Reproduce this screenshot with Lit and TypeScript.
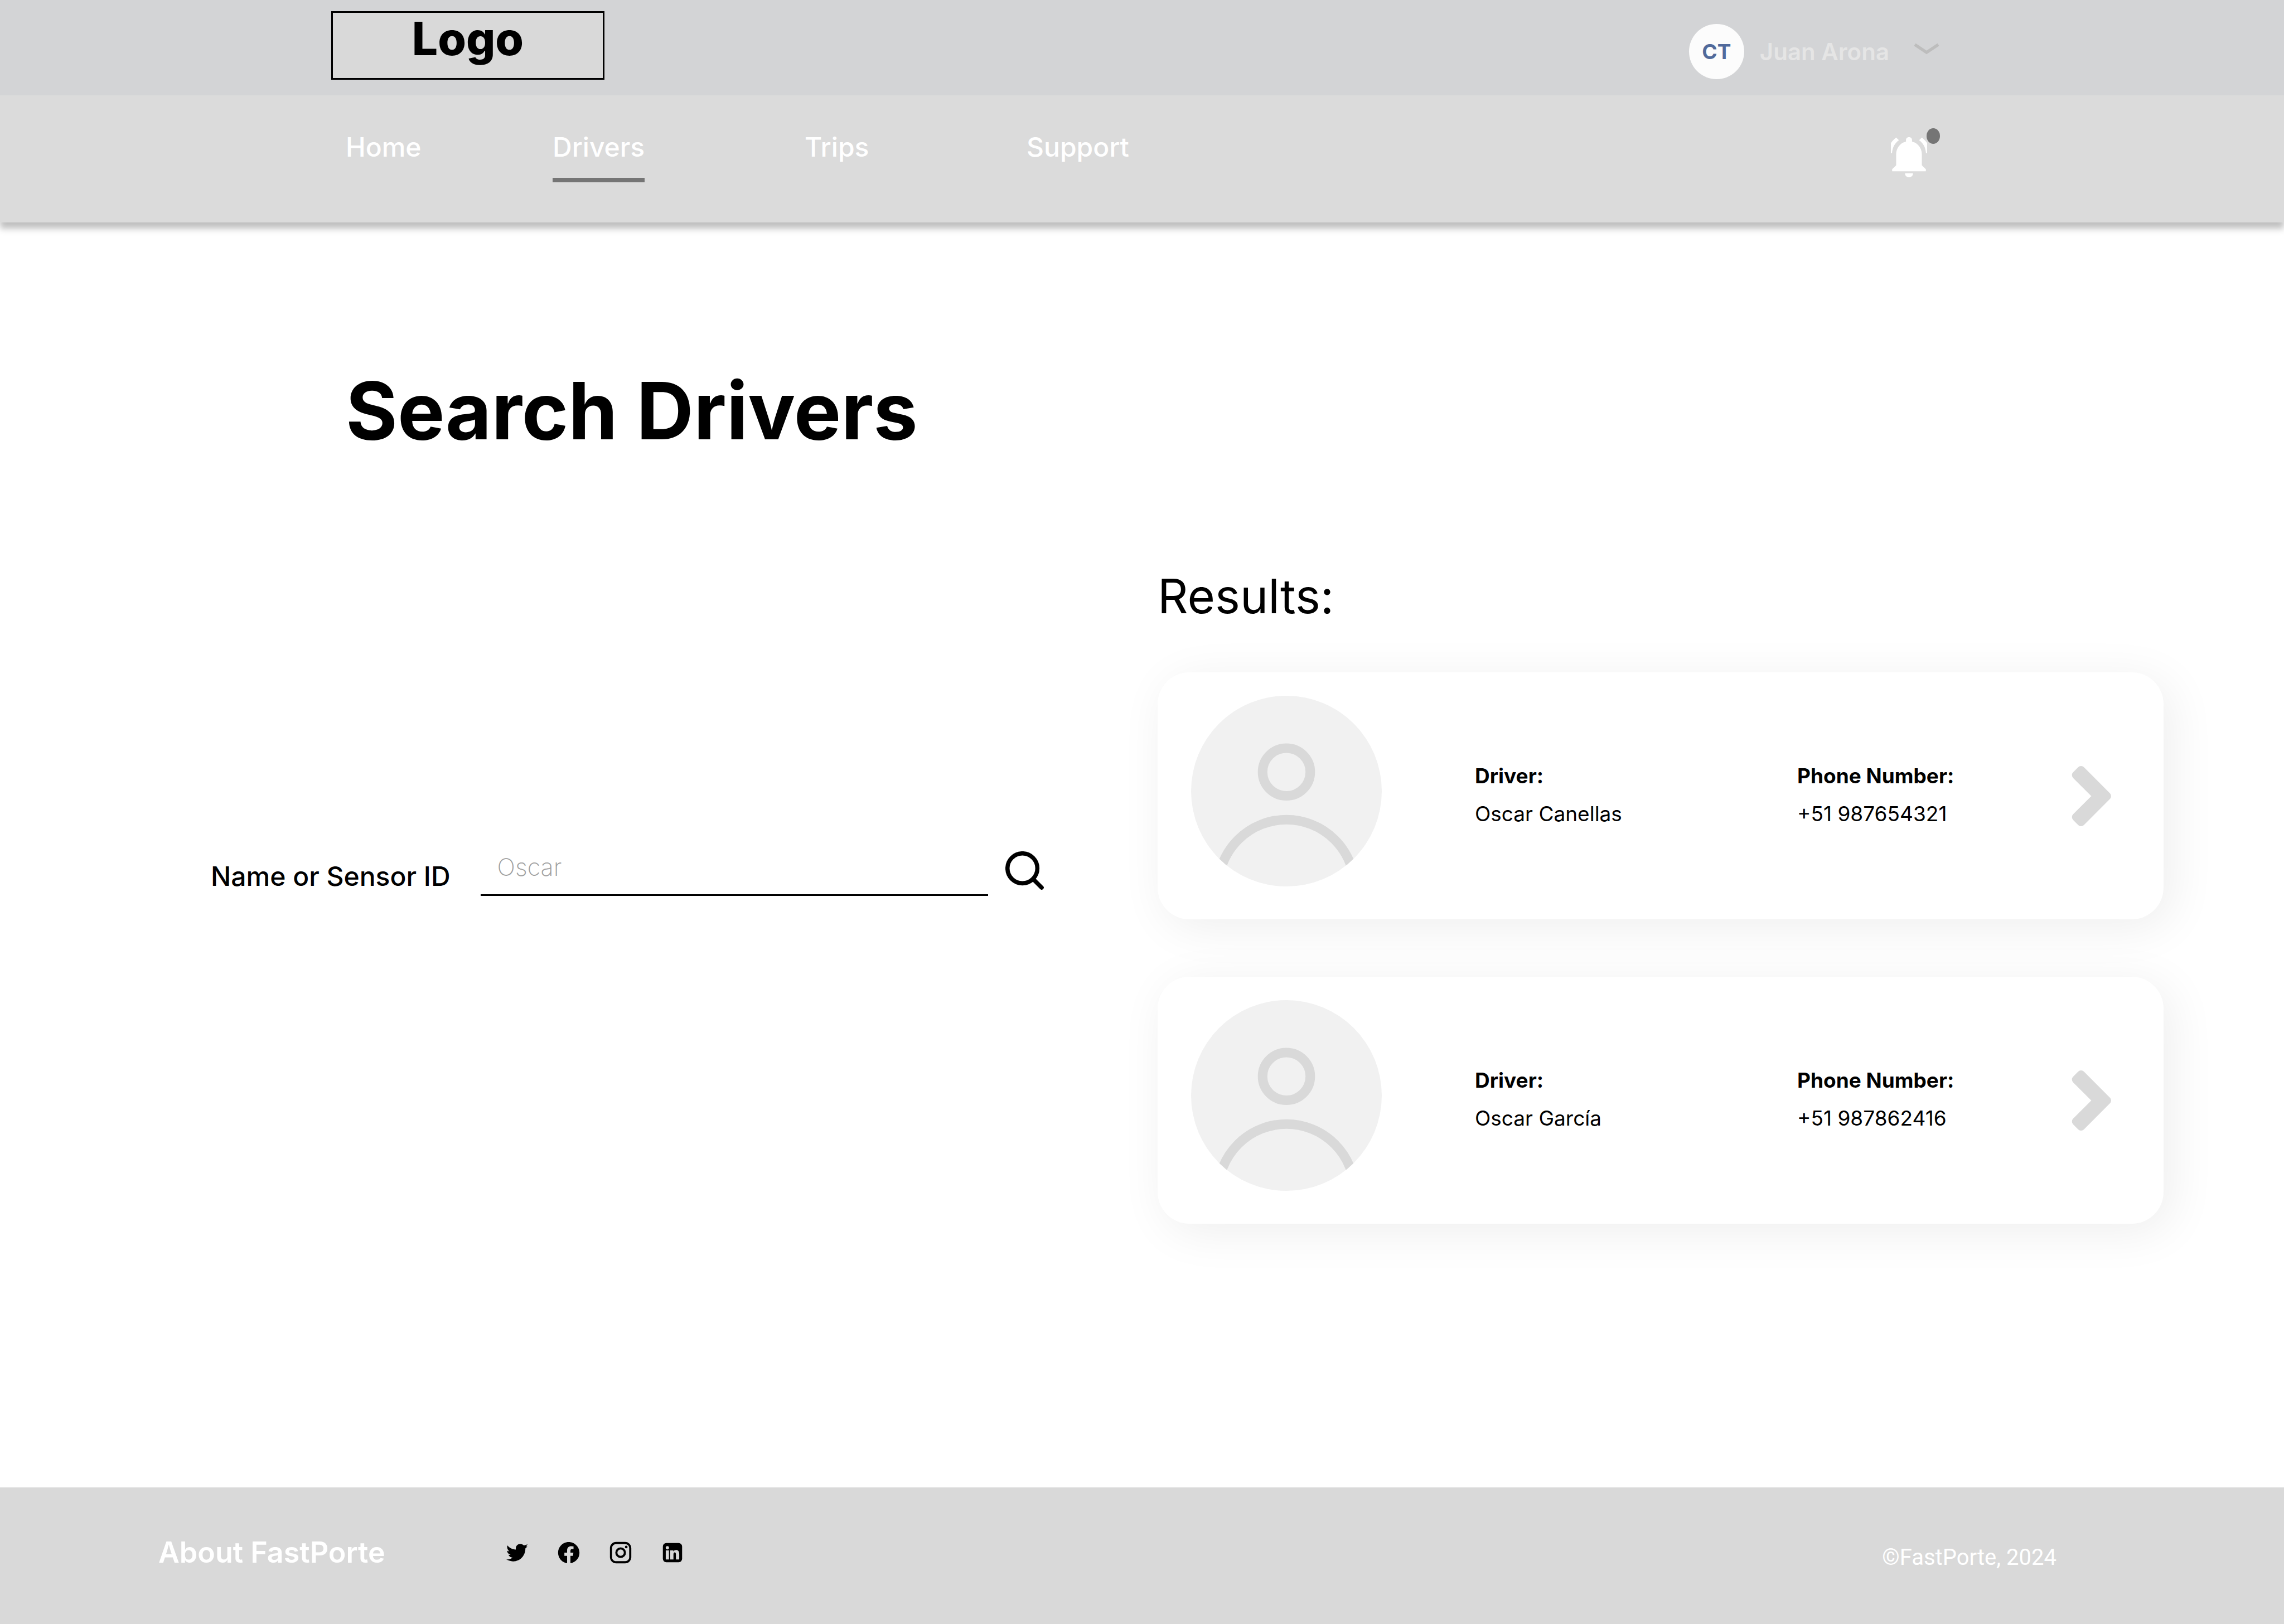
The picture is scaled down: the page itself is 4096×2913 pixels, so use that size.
import { LitElement, html, css, svg } from "lit";
import { customElement, property } from "lit/decorators.js";

interface Driver {
  name: string;
  phone: string;
}

const DRIVERS: Driver[] = [
  { name: "Oscar Canellas", phone: "+51 987654321" },
  { name: "Oscar García", phone: "+51 987862416" },
];

const NAV_ITEMS = ["Home", "Drivers", "Trips", "Support"];

const SOCIAL_ICONS = [
  {
    label: "Twitter",
    box: "36 40 194 194",
    path: "M61 82C76 101 98 112 125 114C121 90 136 72 159 72C170 72 179 76 186 83C196 81 204 78 213 74C211 80 207 85 201 89C205 90 208 90 212 89C208 96 203 101 197 105C199 155 160 203 104 203C86 203 68 197 53 188C71 190 88 185 101 175C86 174 74 166 69 153C75 154 80 154 86 152C70 148 59 137 59 122C64 125 70 127 76 127C61 116 56 98 61 82Z",
  },
  {
    label: "Facebook",
    box: "0 0 24 24",
    path: "M12 2.04C6.5 2.04 2 6.53 2 12.06C2 17.06 5.66 21.21 10.44 21.96V14.96H7.9V12.06H10.44V9.85C10.44 7.34 11.93 5.96 14.22 5.96C15.31 5.96 16.45 6.15 16.45 6.15V8.62H15.19C13.95 8.62 13.56 9.39 13.56 10.18V12.06H16.34L15.89 14.96H13.56V21.96A10 10 0 0 0 22 12.06C22 6.53 17.5 2.04 12 2.04Z",
  },
  {
    label: "Instagram",
    box: "0 0 24 24",
    path: "M7.8,2H16.2C19.4,2 22,4.6 22,7.8V16.2A5.8,5.8 0 0,1 16.2,22H7.8C4.6,22 2,19.4 2,16.2V7.8A5.8,5.8 0 0,1 7.8,2M7.6,4A3.6,3.6 0 0,0 4,7.6V16.4C4,18.39 5.61,20 7.6,20H16.4A3.6,3.6 0 0,0 20,16.4V7.6C20,5.61 18.39,4 16.4,4H7.6M17.25,5.5A1.25,1.25 0 0,1 18.5,6.75A1.25,1.25 0 0,1 17.25,8A1.25,1.25 0 0,1 16,6.75A1.25,1.25 0 0,1 17.25,5.5M12,7A5,5 0 0,1 17,12A5,5 0 0,1 12,17A5,5 0 0,1 7,12A5,5 0 0,1 12,7M12,9A3,3 0 0,0 9,12A3,3 0 0,0 12,15A3,3 0 0,0 15,12A3,3 0 0,0 12,9Z",
  },
  {
    label: "LinkedIn",
    box: "0 0 24 24",
    path: "M6.2 3H17.8A3.2 3.2 0 0 1 21 6.2V17.8A3.2 3.2 0 0 1 17.8 21H6.2A3.2 3.2 0 0 1 3 17.8V6.2A3.2 3.2 0 0 1 6.2 3ZM7.2 5.85A1.55 1.55 0 0 0 7.2 8.95A1.55 1.55 0 0 0 7.2 5.85ZM5.7 9.85V18.35H8.7V9.85ZM9.85 9.85V18.35H12.9V13.8C12.9 12.5 13.3 11.75 14.1 11.75C14.9 11.75 15.2 12.5 15.2 13.8V18.35H18.3V13.2C18.3 10.7 17.2 9.55 15.5 9.55C14.2 9.55 13.3 10.1 12.8 10.9V9.85Z",
  },
];

@customElement("app-header")
export class AppHeader extends LitElement {
  @property() active = "Drivers";

  static styles = css`
    :host {
      display: block;
      position: relative;
      box-shadow: 0 11px 11px rgba(0, 0, 0, 0.25);
    }
    .top {
      display: flex;
      justify-content: space-between;
      align-items: flex-start;
      padding: 20px 618px 28px 594px;
      background: #d3d4d6;
    }
    .logo {
      box-sizing: border-box;
      width: 490px;
      height: 123px;
      border: 3px solid #000;
      background: #d9d9d9;
      color: #000;
      font-size: 82px;
      font-weight: 800;
      line-height: 94px;
      text-align: center;
      text-decoration: none;
    }
    button {
      border: 0;
      padding: 0;
      background: none;
      font: inherit;
      cursor: pointer;
    }
    svg {
      display: block;
    }
    .account {
      display: flex;
      align-items: center;
      margin-top: 23px;
    }
    .initials {
      display: flex;
      align-items: center;
      justify-content: center;
      width: 99px;
      height: 99px;
      border-radius: 50%;
      background: #fcfcfc;
      color: #516a9b;
      font-size: 37px;
      font-weight: 700;
    }
    .name {
      margin: 0 44px 0 28px;
      color: #e5e5e5;
      font-size: 42px;
      font-weight: 600;
    }
    .caret {
      width: 46px;
      height: 32px;
    }
    .bar {
      display: flex;
      justify-content: space-between;
      align-items: flex-start;
      padding: 0 617px 0 620px;
      height: 228px;
      background: #dbdbdb;
    }
    .links {
      display: grid;
      grid-template-columns: 371px 452px 398px auto;
      margin: 0;
      padding: 64px 0 0;
      list-style: none;
    }
    .link {
      display: inline-block;
      padding-bottom: 26px;
      color: #fff;
      font-size: 48px;
      font-weight: 500;
      line-height: 58px;
      text-decoration: none;
    }
    .current {
      border-bottom: 8px solid #757575;
    }
    .bell {
      position: relative;
      width: 88px;
      height: 88px;
      margin-top: 59px;
    }
    .bell-icon {
      width: 65px;
      height: 72px;
      margin-top: 16px;
    }
    .badge {
      position: absolute;
      top: 0;
      right: 0;
      width: 24px;
      height: 28px;
      border-radius: 50%;
      background: #757575;
    }
  `;

  render() {
    return html`
      <div class="top">
        <a class="logo" href="#home">Logo</a>
        <button class="account" type="button">
          <span class="initials">CT</span>
          <span class="name">Juan Arona</span>
          <svg class="caret" viewBox="0 0 46 32" aria-hidden="true">
            <path d="M2 3 L23 17 L44 3" fill="none" stroke="#bdbdbd" stroke-width="5.500" />
          </svg>
        </button>
      </div>
      <nav class="bar">
        <ul class="links">
          ${NAV_ITEMS.map(
            (item) => html`<li>
              <a class="link ${item === this.active ? "current" : ""}" href="#${item.toLowerCase()}">${item}</a>
            </li>`,
          )}
        </ul>
        <button class="bell" type="button" aria-label="Notifications">
          <svg class="bell-icon" viewBox="0 0 90 100" fill="#fff" aria-hidden="true">
            <path
              d="M45 0 C49.500 0 52.500 3 52.500 7 V11 C67 14.500 77 27 77 43 V70 L87 80 V85 H3 V80 L13 70 V43 C13 27 23 14.500 37.500 11 V7 C37.500 3 40.500 0 45 0 Z"
            />
            <path d="M35 90 H55 C55 96 51 100 45 100 C39 100 35 96 35 90 Z" />
            <path d="M13 1 L20 7.700 C9.500 15 3.500 26 2.700 40 H0 V14.700 C4 9 8 5 13 1 Z" />
            <path d="M77 1 L70 7.700 C80.500 15 86.500 26 87.300 40 H90 V14.700 C86 9 82 5 77 1 Z" />
          </svg>
          <span class="badge"></span>
        </button>
      </nav>
    `;
  }
}

@customElement("search-form")
export class SearchForm extends LitElement {
  static styles = css`
    :host {
      display: block;
    }
    .form {
      display: flex;
      align-items: flex-start;
    }
    .label {
      margin: 38px 54px 0 0;
      font-size: 48px;
      font-weight: 500;
      line-height: 58px;
      white-space: nowrap;
    }
    .field {
      box-sizing: border-box;
      flex: 1;
      min-width: 0;
      height: 102px;
      border: 0;
      border-bottom: 3px solid #000;
      border-radius: 0;
      padding: 0 30px;
      background: none;
      color: #000;
      font: inherit;
      font-size: 43px;
      font-weight: 200;
      outline: none;
    }
    .field::placeholder {
      color: #a0a0a0;
      opacity: 1;
    }
    .submit {
      margin: 22px 0 0 31px;
      border: 0;
      padding: 0;
      background: none;
      cursor: pointer;
    }
    .glass {
      display: block;
      width: 69px;
      height: 69px;
    }
  `;

  render() {
    return html`
      <form class="form" role="search" @submit=${(e: Event) => e.preventDefault()}>
        <label class="label" for="query">Name or Sensor ID</label>
        <input class="field" id="query" type="text" placeholder="Oscar" />
        <button class="submit" type="submit" aria-label="Search">
          <svg class="glass" viewBox="0 0 96 96" fill="none" stroke="#000" stroke-width="10.500" aria-hidden="true">
            <circle cx="42.500" cy="42.500" r="37.300" />
            <path d="M69 69 L90.500 90.500" stroke-linecap="round" />
          </svg>
        </button>
      </form>
    `;
  }
}

@customElement("driver-card")
export class DriverCard extends LitElement {
  @property({ attribute: false }) driver!: Driver;

  static styles = css`
    :host {
      display: block;
    }
    .card {
      display: grid;
      grid-template-columns: 509px 578fr 492fr 71px;
      align-items: center;
      padding: 42px 94px 42px 60px;
      border-radius: 57px;
      background: #fff;
      box-shadow: 14px 14px 85px rgba(0, 0, 0, 0.07);
    }
    svg {
      display: block;
    }
    .avatar {
      width: 342px;
      height: 342px;
      margin-bottom: 17px;
    }
    .fact {
      margin: 0;
      padding-bottom: 4px;
      font-size: 37px;
      line-height: 45px;
    }
    .term {
      margin-bottom: 23px;
      font-weight: 700;
    }
    .value {
      margin: 0;
      font-weight: 400;
    }
    .chevron {
      width: 71px;
      height: 108px;
    }
  `;

  render() {
    return html`
      <article class="card">
        <svg class="avatar" viewBox="0 0 480 480" aria-hidden="true">
          <defs>
            <clipPath id="disc"><circle cx="240" cy="240" r="240" /></clipPath>
          </defs>
          <circle cx="240" cy="240" r="240" fill="#f1f1f1" />
          <g clip-path="url(#disc)" fill="none" stroke="#d9d9d9" stroke-width="24">
            <circle cx="240" cy="192" r="60" />
            <circle cx="240" cy="484" r="172" />
          </g>
        </svg>
        <dl class="fact">
          <dt class="term">Driver:</dt>
          <dd class="value">${this.driver.name}</dd>
        </dl>
        <dl class="fact">
          <dt class="term">Phone Number:</dt>
          <dd class="value">${this.driver.phone}</dd>
        </dl>
        <a href="#driver" aria-label="Open ${this.driver.name}">
          <svg class="chevron" viewBox="0 0 100 152" aria-hidden="true">
            <path
              d="M24 10 L90 76 L24 142 L11 129 L64 76 L11 23 Z"
              fill="#d9d9d9"
              stroke="#d9d9d9"
              stroke-width="20"
              stroke-linejoin="round"
            />
          </svg>
        </a>
      </article>
    `;
  }
}

@customElement("app-footer")
export class AppFooter extends LitElement {
  static styles = css`
    :host {
      display: block;
    }
    .footer {
      box-sizing: border-box;
      display: flex;
      align-items: flex-start;
      min-height: 245px;
      padding: 86px 408px 60px 284px;
      background: #d9d9d9;
      color: #fff;
    }
    .about {
      margin-right: 213px;
      color: inherit;
      font-size: 52px;
      font-weight: 600;
      line-height: 62px;
      text-decoration: none;
    }
    .social {
      display: flex;
      gap: 47px;
      margin: 0;
      padding: 8px 0 0;
      list-style: none;
    }
    .icon {
      display: block;
      width: 46px;
      height: 46px;
      fill: #000;
      fill-rule: evenodd;
    }
    .copyright {
      margin: 16px 0 0 auto;
      font-family: Roboto, sans-serif;
      font-size: 40px;
      line-height: 47px;
    }
  `;

  render() {
    return html`
      <footer class="footer">
        <a class="about" href="#about">About FastPorte</a>
        <ul class="social">
          ${SOCIAL_ICONS.map(
            (icon) => html`<li>
              <a href="#${icon.label.toLowerCase()}" aria-label=${icon.label}>
                <svg class="icon" viewBox=${icon.box} aria-hidden="true">${svg`<path d=${icon.path} />`}</svg>
              </a>
            </li>`,
          )}
        </ul>
        <p class="copyright">©FastPorte, 2024</p>
      </footer>
    `;
  }
}

@customElement("app-root")
export class AppRoot extends LitElement {
  static styles = css`
    :host {
      display: flex;
      flex-direction: column;
      min-height: 100vh;
      background: #fff;
      color: #000;
      font-family: Inter, "Liberation Sans", sans-serif;
    }
    .main {
      flex: 1;
      padding: 251px 216px 100px 378px;
    }
    .title {
      margin: 0 0 196px 242px;
      font-size: 142px;
      font-weight: 700;
      line-height: 172px;
    }
    .columns {
      display: grid;
      grid-template-columns: 1494fr 1804fr;
      column-gap: 204px;
      align-items: start;
    }
    .search {
      margin-top: 487px;
    }
    .heading {
      margin: 0 0 85px;
      font-size: 85px;
      font-weight: 400;
      line-height: 103px;
    }
    .cards {
      display: flex;
      flex-direction: column;
      gap: 103px;
    }
  `;

  render() {
    return html`
      <app-header></app-header>
      <main class="main">
        <h1 class="title">Search Drivers</h1>
        <div class="columns">
          <search-form class="search"></search-form>
          <section>
            <h2 class="heading">Results:</h2>
            <div class="cards">
              ${DRIVERS.map((driver) => html`<driver-card .driver=${driver}></driver-card>`)}
            </div>
          </section>
        </div>
      </main>
      <app-footer></app-footer>
    `;
  }
}
